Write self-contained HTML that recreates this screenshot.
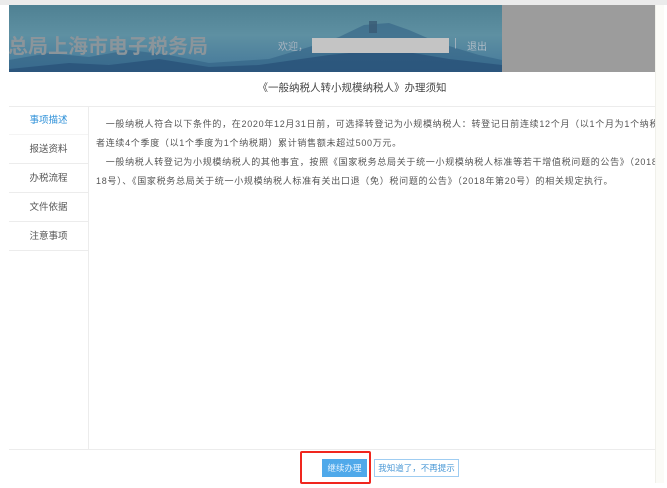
<!DOCTYPE html>
<html><head><meta charset="utf-8"><style>
*{margin:0;padding:0;box-sizing:border-box}
body{width:667px;height:488px;background:#fff;position:relative;overflow:hidden;font-family:"Liberation Sans","Noto Sans CJK SC",sans-serif;color:#555}
.top{position:absolute;left:0;top:0;width:667px;height:5px;background:#ebebeb}
.banner{position:absolute;left:9px;top:5px;width:493px;height:67px;background:linear-gradient(180deg,#4f8193 0%,#5e90a2 45%,#44789a 100%);overflow:hidden}
.gray{position:absolute;left:502px;top:5px;width:153px;height:67px;background:#9c9c9c}
.sb{position:absolute;left:655px;top:5px;width:9px;height:478px;background:#fbfbf7;border-left:1px solid #f0f0ea}
.btitle{position:absolute;left:-1px;top:25px;font-size:20px;font-weight:bold;color:#8b959b;white-space:nowrap}
.welcome{position:absolute;left:269px;top:33px;font-size:10px;color:#a8b4c0}
.namebox{position:absolute;left:303px;top:33px;width:137px;height:15px;background:#c4c4c4}
.sep{position:absolute;left:445px;top:32px;font-size:11px;color:#a8b4c0}
.logout{position:absolute;left:458px;top:33px;font-size:10px;color:#b0bcc6}
.title{position:absolute;left:7px;width:648px;top:80px;text-align:center;font-size:10.5px;color:#444;padding-left:42px}
.hl{position:absolute;left:9px;width:646px;height:1px;background:#ececec}
.side{position:absolute;left:9px;top:106px;width:80px;height:343px;border-right:1px solid #ececec}
.side div{height:29px;line-height:29px;text-align:center;font-size:9.5px;color:#555;border-bottom:1px solid #ececec;padding-right:0}
.side div.act{color:#2b8fd8;border-bottom:1px solid #f4f4f4}
.txt{position:absolute;left:96px;top:115px;width:559px;font-size:9px;line-height:19px;color:#555;white-space:nowrap;overflow:hidden;letter-spacing:0.7px}
.btn1{position:absolute;left:322px;top:459px;width:45px;height:18px;background:#4fa9ea;color:#e8f4ff;font-size:8.5px;text-align:center;line-height:18px}
.red{position:absolute;left:300px;top:451px;width:71px;height:33px;border:2px solid #f0261e;border-radius:2px}
.btn2{position:absolute;left:374px;top:459px;width:85px;height:18px;border:1px solid #9fcdf2;color:#4a98d6;font-size:8.5px;text-align:center;line-height:16px}
</style></head><body>
<div class="top"></div>
<div class="banner">
<svg width="493" height="67" style="position:absolute;left:0;top:0">
<path d="M0 55 L40 48 L80 52 L120 45 L160 50 L200 58 L260 54 L300 42 L330 32 L355 20 L380 18 L400 25 L430 38 L470 50 L493 55 L493 67 L0 67Z" fill="#2f5f83" opacity="0.55"/>
<path d="M0 64 L60 58 L100 60 L150 54 L200 62 L250 60 L320 50 L380 44 L440 54 L493 60 L493 67 L0 67Z" fill="#264f76" opacity="0.7"/>
<rect x="360" y="16" width="8" height="12" fill="#3a5a74" opacity="0.8"/>
</svg>
<div class="btitle">总局上海市电子税务局</div>
<div class="welcome">欢迎，</div>
<div class="namebox"></div>
<div class="sep">|</div>
<div class="logout">退出</div>
</div>
<div class="gray"></div>
<div class="sb"></div>
<div class="title">《一般纳税人转小规模纳税人》办理须知</div>
<div class="hl" style="top:106px"></div>
<div class="side">
<div class="act">事项描述</div><div>报送资料</div><div>办税流程</div><div>文件依据</div><div>注意事项</div>
</div>
<div class="txt">
　一般纳税人符合以下条件的，在2020年12月31日前，可选择转登记为小规模纳税人：转登记日前连续12个月（以1个月为1个纳税期）或<br>
者连续4个季度（以1个季度为1个纳税期）累计销售额未超过500万元。<br>
　一般纳税人转登记为小规模纳税人的其他事宜，按照《国家税务总局关于统一小规模纳税人标准等若干增值税问题的公告》（2018年第<br>
18号）、《国家税务总局关于统一小规模纳税人标准有关出口退（免）税问题的公告》（2018年第20号）的相关规定执行。
</div>
<div class="hl" style="top:449px"></div>
<div class="btn1">继续办理</div>
<div class="red"></div>
<div class="btn2">我知道了，不再提示</div>
</body></html>
